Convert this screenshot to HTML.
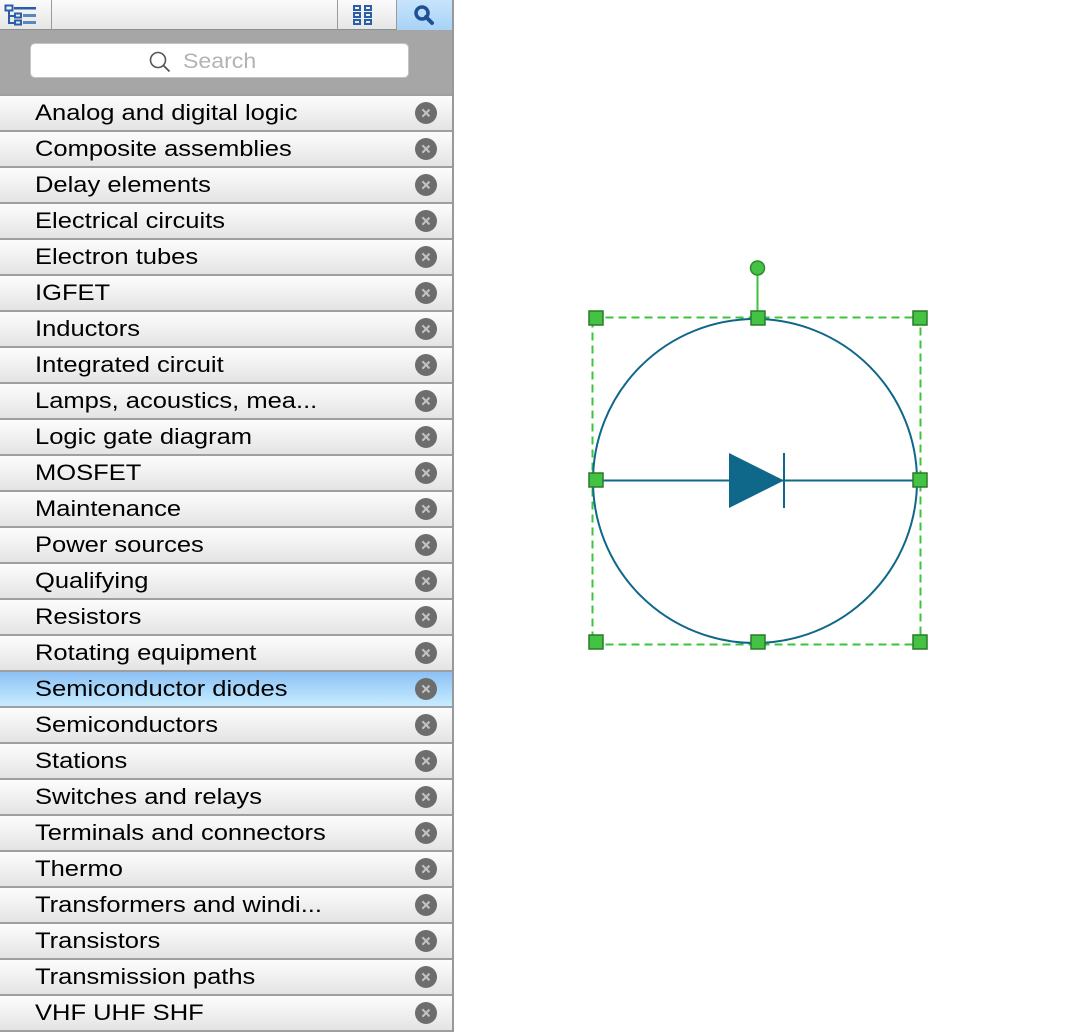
<!DOCTYPE html>
<html><head><meta charset="utf-8">
<style>
*{margin:0;padding:0;box-sizing:border-box}
body{width:1080px;height:1032px;background:#fff;position:relative;overflow:hidden;font-family:"Liberation Sans",Arial,sans-serif}
#side{position:absolute;left:0;top:0;width:454px;height:1032px;background:#a6a6a6;border-right:2px solid #999}
#tb{position:absolute;left:0;top:0;width:452px;height:30px;background:linear-gradient(#fbfbfb,#e6e6e6);border-bottom:1px solid #8e8e8e}
.sep{position:absolute;top:0;width:1px;height:30px;background:#9a9a9a}
#srch{position:absolute;left:30px;top:43px;width:379px;height:35px;background:#fff;border:1px solid #c4c4c4;border-radius:5px;color:#b3b3b3;font-size:21px;line-height:35px}
#list{position:absolute;left:0;top:94px;width:452px}
.r{height:36px;border-top:2px solid #9f9f9f;background:linear-gradient(#fcfcfc,#f4f4f4 35%,#e4e4e4);position:relative;font-size:22px;line-height:34px;color:#000}
.r b{font-weight:normal;position:absolute;left:35px;top:0;white-space:nowrap;transform:scaleX(1.16);transform-origin:0 0}
.r.sel{background:linear-gradient(#8cc0f3,#a9d7fb 50%,#c8ecff)}
.r:last-child{border-bottom:2px solid #9f9f9f;height:38px}
.x{position:absolute;left:415px;top:6px;width:22px;height:22px;border-radius:50%;background:#6d6d6d}
.x:before,.x:after{content:"";position:absolute;left:10.25px;top:6px;width:1.5px;height:10px;background:#c4c4c4;transform:rotate(45deg)}
.x:after{transform:rotate(-45deg)}
</style></head><body>
<div id="side">
 <div id="tb">
  <svg style="position:absolute;left:4px;top:4px" width="34" height="22" viewBox="0 0 34 22">
   <rect x="1.5" y="1.5" width="7" height="5" fill="none" stroke="#2a5ea8" stroke-width="2"/>
   <rect x="10" y="3" width="22" height="2.5" fill="#2a5ea8"/>
   <path d="M5 7v12h5M5 12h5" stroke="#2a5ea8" stroke-width="2" fill="none"/>
   <rect x="11" y="9.5" width="6" height="4" fill="none" stroke="#2a5ea8" stroke-width="2"/>
   <rect x="19" y="10" width="13" height="3" fill="#5a86c0"/>
   <rect x="11" y="16.5" width="6" height="4" fill="none" stroke="#2a5ea8" stroke-width="2"/>
   <rect x="19" y="17" width="13" height="3" fill="#5a86c0"/>
  </svg>
  <div class="sep" style="left:51px"></div>
  <div class="sep" style="left:337px"></div>
  <svg style="position:absolute;left:353px;top:5px" width="22" height="22" viewBox="0 0 22 22">
   <g fill="none" stroke="#2a5ea8" stroke-width="2"><rect x="1" y="1" width="6" height="4"/><rect x="12" y="1" width="6" height="4"/><rect x="1" y="8" width="6" height="4"/><rect x="12" y="8" width="6" height="4"/><rect x="1" y="15" width="6" height="4"/><rect x="12" y="15" width="6" height="4"/></g>
  </svg>
  <div class="sep" style="left:396px"></div>
  <div style="position:absolute;left:397px;top:0;width:55px;height:30px;background:linear-gradient(#c8e4fb,#a8d2f6)"></div>
  <svg style="position:absolute;left:413px;top:4px" width="24" height="22" viewBox="0 0 24 22">
   <circle cx="9" cy="9" r="6" fill="none" stroke="#1f4f95" stroke-width="3.5"/>
   <path d="M13 13l6 6" stroke="#1f4f95" stroke-width="4" stroke-linecap="round"/>
  </svg>
 </div>
 <div id="srch"><svg style="position:absolute;left:118px;top:7px" width="22" height="22" viewBox="0 0 22 22"><circle cx="9" cy="9" r="7.5" fill="none" stroke="#555" stroke-width="1.6"/><path d="M14.5 14.5l6 6" stroke="#555" stroke-width="1.8"/></svg><span style="position:absolute;left:152px;top:0;transform:scaleX(1.1);transform-origin:0 0">Search</span></div>
 <div id="list">
  <div class="r"><b>Analog and digital logic</b><span class="x"></span></div>
  <div class="r"><b>Composite assemblies</b><span class="x"></span></div>
  <div class="r"><b>Delay elements</b><span class="x"></span></div>
  <div class="r"><b>Electrical circuits</b><span class="x"></span></div>
  <div class="r"><b>Electron tubes</b><span class="x"></span></div>
  <div class="r"><b>IGFET</b><span class="x"></span></div>
  <div class="r"><b>Inductors</b><span class="x"></span></div>
  <div class="r"><b>Integrated circuit</b><span class="x"></span></div>
  <div class="r"><b>Lamps, acoustics, mea...</b><span class="x"></span></div>
  <div class="r"><b>Logic gate diagram</b><span class="x"></span></div>
  <div class="r"><b>MOSFET</b><span class="x"></span></div>
  <div class="r"><b>Maintenance</b><span class="x"></span></div>
  <div class="r"><b>Power sources</b><span class="x"></span></div>
  <div class="r"><b>Qualifying</b><span class="x"></span></div>
  <div class="r"><b>Resistors</b><span class="x"></span></div>
  <div class="r"><b>Rotating equipment</b><span class="x"></span></div>
  <div class="r sel"><b>Semiconductor diodes</b><span class="x"></span></div>
  <div class="r"><b>Semiconductors</b><span class="x"></span></div>
  <div class="r"><b>Stations</b><span class="x"></span></div>
  <div class="r"><b>Switches and relays</b><span class="x"></span></div>
  <div class="r"><b>Terminals and connectors</b><span class="x"></span></div>
  <div class="r"><b>Thermo</b><span class="x"></span></div>
  <div class="r"><b>Transformers and windi...</b><span class="x"></span></div>
  <div class="r"><b>Transistors</b><span class="x"></span></div>
  <div class="r"><b>Transmission paths</b><span class="x"></span></div>
  <div class="r"><b>VHF UHF SHF</b><span class="x"></span></div>
 </div>
</div>
<svg style="position:absolute;left:0;top:0" width="1080" height="1032" viewBox="0 0 1080 1032">
 <rect x="592.5" y="317.5" width="328" height="327" fill="none" stroke="#3cc43c" stroke-width="2" stroke-dasharray="8,5"/>
 <circle cx="755" cy="481" r="162" fill="none" stroke="#0f6789" stroke-width="2"/>
 <path d="M596 480.5H920" stroke="#0f6789" stroke-width="2"/>
 <path d="M729 453L784 480.5L729 508Z" fill="#0f6789"/>
 <path d="M784 453V508" stroke="#0f6789" stroke-width="2"/>
 <path d="M757.5 268V318" stroke="#3cc43c" stroke-width="2"/>
 <circle cx="757.5" cy="268" r="7" fill="#43c243" stroke="#2d8a2d" stroke-width="1.5"/>
 <g fill="#43c243" stroke="#2a7a2a" stroke-width="1.5">
  <rect x="589" y="311" width="14" height="14"/><rect x="751" y="311" width="14" height="14"/><rect x="913" y="311" width="14" height="14"/>
  <rect x="589" y="473" width="14" height="14"/><rect x="913" y="473" width="14" height="14"/>
  <rect x="589" y="635" width="14" height="14"/><rect x="751" y="635" width="14" height="14"/><rect x="913" y="635" width="14" height="14"/>
 </g>
</svg>
</body></html>
